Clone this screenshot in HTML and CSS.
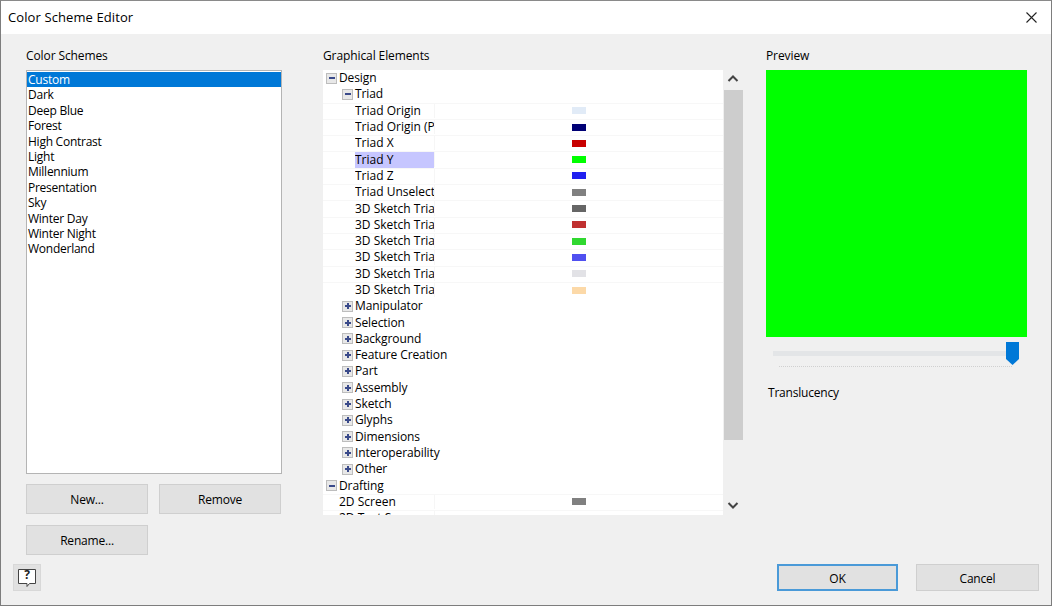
FILE: index.html
```html
<!DOCTYPE html>
<html lang="en">
<head>
<meta charset="utf-8">
<title>Color Scheme Editor</title>
<link rel="stylesheet" href="styles.css">
</head>
<body>
<div class="window">
  <header class="titlebar">
    <span class="title">Color Scheme Editor</span>
    <svg class="close" width="11" height="11" viewBox="0 0 11 11"><path d="M.5.5l10 10M10.500.5l-10 10" stroke="#222" stroke-width="1.100" fill="none"/></svg>
  </header>
  <main class="content">
    <section class="schemes">
      <h2 class="label">Color Schemes</h2>
      <ul class="list">
        <li class="selected">Custom</li><li>Dark</li><li>Deep Blue</li><li>Forest</li><li>High Contrast</li><li>Light</li><li>Millennium</li><li>Presentation</li><li>Sky</li><li>Winter Day</li><li>Winter Night</li><li>Wonderland</li>
      </ul>
      <div class="scheme-buttons">
        <button class="btn">New...</button>
        <button class="btn">Remove</button>
        <button class="btn">Rename...</button>
      </div>
    </section>
    <section class="elements">
      <h2 class="label">Graphical Elements</h2>
      <div class="tree-wrap">
        <div class="tree">
          <div class="row l0"><i class="tog minus"></i><span class="name">Design</span></div>
          <div class="row l1"><i class="tog minus"></i><span class="name">Triad</span></div>
          <div class="row l2 leaf"><span class="name">Triad Origin</span><span class="cell"><b style="background:#e1ebf7"></b></span></div>
          <div class="row l2 leaf"><span class="name">Triad Origin (Pressed)</span><span class="cell"><b style="background:#000075"></b></span></div>
          <div class="row l2 leaf"><span class="name">Triad X</span><span class="cell"><b style="background:#c80000"></b></span></div>
          <div class="row l2 leaf active"><span class="name">Triad Y</span><span class="cell"><b style="background:#00ff00"></b></span></div>
          <div class="row l2 leaf"><span class="name">Triad Z</span><span class="cell"><b style="background:#2020f0"></b></span></div>
          <div class="row l2 leaf"><span class="name">Triad Unselected</span><span class="cell"><b style="background:#808080"></b></span></div>
          <div class="row l2 leaf"><span class="name">3D Sketch Triad</span><span class="cell"><b style="background:#666666"></b></span></div>
          <div class="row l2 leaf"><span class="name">3D Sketch Triad</span><span class="cell"><b style="background:#c03030"></b></span></div>
          <div class="row l2 leaf"><span class="name">3D Sketch Triad</span><span class="cell"><b style="background:#30d830"></b></span></div>
          <div class="row l2 leaf"><span class="name">3D Sketch Triad</span><span class="cell"><b style="background:#5050f0"></b></span></div>
          <div class="row l2 leaf"><span class="name">3D Sketch Triad</span><span class="cell"><b style="background:#e2e2e6"></b></span></div>
          <div class="row l2 leaf"><span class="name">3D Sketch Triad</span><span class="cell"><b style="background:#fcd9a8"></b></span></div>
          <div class="row l1"><i class="tog plus"></i><span class="name">Manipulator</span></div>
          <div class="row l1"><i class="tog plus"></i><span class="name">Selection</span></div>
          <div class="row l1"><i class="tog plus"></i><span class="name">Background</span></div>
          <div class="row l1"><i class="tog plus"></i><span class="name">Feature Creation</span></div>
          <div class="row l1"><i class="tog plus"></i><span class="name">Part</span></div>
          <div class="row l1"><i class="tog plus"></i><span class="name">Assembly</span></div>
          <div class="row l1"><i class="tog plus"></i><span class="name">Sketch</span></div>
          <div class="row l1"><i class="tog plus"></i><span class="name">Glyphs</span></div>
          <div class="row l1"><i class="tog plus"></i><span class="name">Dimensions</span></div>
          <div class="row l1"><i class="tog plus"></i><span class="name">Interoperability</span></div>
          <div class="row l1"><i class="tog plus"></i><span class="name">Other</span></div>
          <div class="row l0"><i class="tog minus"></i><span class="name">Drafting</span></div>
          <div class="row l3 leaf"><span class="name">2D Screen</span><span class="cell"><b style="background:#808080"></b></span></div>
          <div class="row l3 leaf"><span class="name">2D Text Screen</span><span class="cell"></span></div>
        </div>
        <div class="scrollbar">
          <svg class="arrow up" width="20" height="20" viewBox="0 0 20 20"><path d="M5.500 12l4.500-4.500 4.500 4.500" stroke="#444" stroke-width="2" fill="none"/></svg>
          <div class="track"><div class="thumb"></div></div>
          <svg class="arrow" width="20" height="20" viewBox="0 0 20 20"><path d="M5.500 8l4.500 4.500 4.500-4.500" stroke="#444" stroke-width="2" fill="none"/></svg>
        </div>
      </div>
    </section>
    <section class="preview">
      <h2 class="label">Preview</h2>
      <div class="swatch"></div>
      <div class="slider">
        <div class="rail"></div>
        <svg class="knob" width="13" height="23" viewBox="0 0 13 23"><path d="M0 0h13v17l-6.500 6-6.500-6z" fill="#0078d7"/></svg>
      </div>
      <div class="ticks"></div>
      <div class="caption">Translucency</div>
    </section>
  </main>
  <footer class="footer">
    <button class="help" aria-label="Help">
      <svg width="20" height="22" viewBox="0 0 20 22"><path d="M1.500 2.500h17v14h-6l-2.500 3v-3h-8.500z" fill="#fff" stroke="#444" stroke-width="1"/></svg>
      <span class="q">?</span>
    </button>
    <div class="actions">
      <button class="btn primary">OK</button>
      <button class="btn">Cancel</button>
    </div>
  </footer>
</div>
</body>
</html>
```

FILE: styles.css
```css
* { box-sizing: border-box; }
html, body { margin: 0; padding: 0; }
body { width: 1052px; height: 606px; overflow: hidden; background: #f0f0f0; font-family: "Open Sans", "Noto Sans", sans-serif; font-size: 12px; color: #000; }
.window { width: 1052px; height: 606px; border: 1px solid #7d7d7d; border-top-color: #8a8a8a; display: flex; flex-direction: column; background: #f0f0f0; }
.titlebar { height: 33px; flex: none; background: #fff; display: flex; align-items: center; justify-content: space-between; padding: 0 14px 2px 7px; }
.title { font-size: 13px; letter-spacing: .1px; }
.close { margin-top: 1px; }
.content { flex: none; height: 521px; display: flex; }
.label { margin: 0; font-weight: 400; font-size: 12px; line-height: 16px; height: 36px; padding-top: 14px; letter-spacing: -.1px; }
.schemes { width: 256px; margin-left: 25px; }
.list { list-style: none; margin: 0; padding: 1px 0; width: 256px; height: 404px; background: #fff; border: 1px solid #b4b4b4; }
.list li { height: 15.400px; line-height: 15px; padding-left: 1px; letter-spacing: -.25px; }
.list .selected { background: #0078d7; color: #fff; }
.scheme-buttons { display: grid; grid-template-columns: 122px 122px; column-gap: 11px; row-gap: 11px; margin-top: 10px; }
.btn { height: 30px; background: #e1e1e1; border: 1px solid #cfcfcf; font: inherit; color: #000; padding: 0; letter-spacing: -.2px; }
.elements { width: 420px; margin-left: 41px; }
.tree-wrap { display: flex; height: 445px; }
.tree { width: 400px; height: 445px; overflow: hidden; background: #fff; }
.row { height: 16.310px; display: flex; align-items: center; position: relative; line-height: 16px; letter-spacing: -.1px; }
.row.leaf { border-top: 1px solid #f7f7f7; padding-bottom: 1px; letter-spacing: 0; }
.name { white-space: nowrap; }
.l0 { padding-left: 3px; }
.l1 { padding-left: 19px; }
.l2 .name, .l3 .name { flex: none; width: 79px; overflow: hidden; height: 16px; }
.l2 { padding-left: 32px; }
.l3 { padding-left: 16px; }
.l3 .name { width: 95px; }
.active .name { background: #c6c6ff; }
.cell { flex: 1; height: 100%; display: flex; align-items: center; padding-left: 137px; border-left: 1px solid #f6f6f6; }
.cell b { display: block; width: 14px; height: 7px; }
.tog { flex: none; width: 11px; height: 11px; margin-right: 2px; border: 1px solid #bdbdbd; background: #e8e8e8; position: relative; }
.tog::before { content: ""; position: absolute; left: 1.500px; top: 3.500px; width: 6px; height: 2px; background: #3a4a8a; }
.plus::after { content: ""; position: absolute; left: 3.500px; top: 1.500px; width: 2px; height: 6px; background: #3a4a8a; }
.scrollbar { width: 20px; display: flex; flex-direction: column; background: #f0f0f0; }
.arrow { flex: none; }
.arrow.up { margin-top: -1px; margin-bottom: 1px; }
.track { flex: 1; }
.thumb { height: 350px; background: #cdcdcd; margin-left: 1px; }
.preview { width: 261px; margin-left: 23px; }
.swatch { width: 261px; height: 267px; background: #00ff00; }
.slider { height: 28px; position: relative; margin-left: 7px; width: 246px; }
.rail { position: absolute; left: 0; right: 7px; top: 14px; height: 5px; background: #e3e5e7; }
.knob { position: absolute; right: 0; top: 5px; }
.ticks { margin-left: 13px; width: 233px; height: 0; border-top: 1px dotted #d0d0d0; margin-top: 1px; }
.caption { margin: 18px 0 0 2px; line-height: 16px; letter-spacing: -.2px; }
.footer { flex: 1; display: flex; justify-content: space-between; align-items: flex-start; padding: 9px 12px 0 12px; }
.help { width: 28px; height: 27px; background: #e1e1e1; border: 1px solid #d8d8d8; padding: 0; font-family: inherit; position: relative; display: flex; align-items: center; justify-content: center; }
.q { position: absolute; left: 0; right: 0; top: 2px; text-align: center; font-weight: 700; font-size: 12px; line-height: 16px; color: #222; }
.actions { display: flex; gap: 18px; }
.actions .btn { width: 123px; height: 27px; padding-top: 1px; }
.actions .btn.primary { width: 121px; border: 2px solid #4a9ad8; }
```
